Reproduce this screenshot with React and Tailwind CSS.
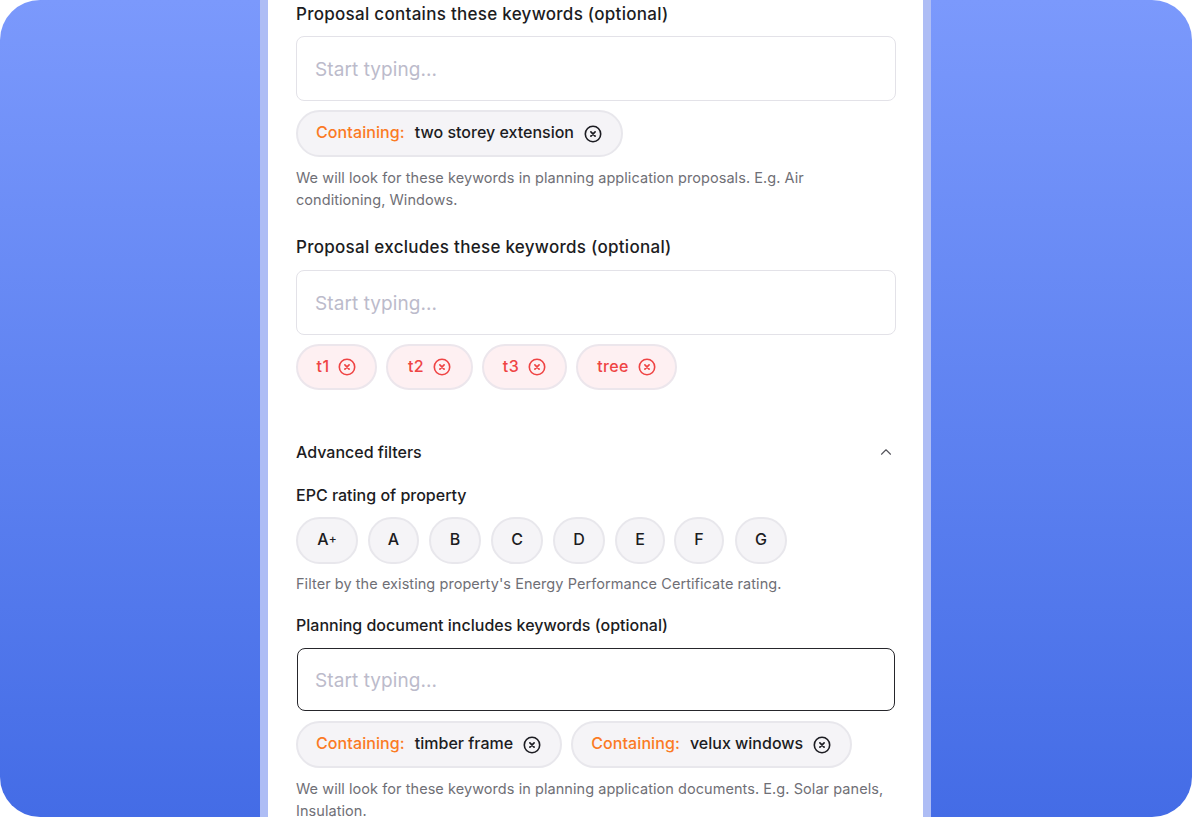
import { ChevronUp } from "lucide-react"

const font = { fontFamily: "Inter, sans-serif" }

const CloseIcon = ({ className }) => (
  <svg viewBox="0 0 18 18" fill="none" stroke="currentColor" className={className}>
    <circle cx="9" cy="9" r="7.7" strokeWidth="1.6" />
    <path d="M6.9 6.9l4.2 4.2M11.1 6.9l-4.2 4.2" strokeWidth="1.7" strokeLinecap="round" />
  </svg>
)

const Label = ({ children, className = "" }) => (
  <div className={`text-[17px] leading-6 font-medium text-[#1c1c22] tracking-[0.28px] ${className}`}>{children}</div>
)

const SubLabel = ({ children, className = "" }) => (
  <div className={`text-[16px] leading-6 font-medium text-[#1c1c22] ${className}`}>{children}</div>
)

const Help = ({ children, className = "" }) => (
  <p className={`w-[592px] text-[14.5px] leading-[22px] tracking-[0.06px] text-[#6f6f76] ${className}`}>{children}</p>
)

const KeywordInput = ({ focused }) => (
  <div
    className={`flex items-center rounded-lg bg-white pt-[3px] text-[19px] tracking-[0.08px] text-[#bcbbcb] ${
      focused ? "mx-px h-[63px] border-[1.5px] border-[#26262b] pl-[17px]" : "h-[65px] border border-[#e3e2e8] pl-[18px]"
    }`}
  >
    Start typing...
  </div>
)

const ContainChip = ({ text }) => (
  <div className="flex h-[47px] items-center rounded-full border-2 border-[#e8e7ec] bg-[#f5f4f7] pr-[19px] pl-[18px] text-[16px] font-medium">
    <span className="mr-[10px] pb-[3px] tracking-[0.1px] text-[#fb7a24]">Containing:</span>
    <span className="mr-[10px] pb-[3px] text-[#1c1c22]">{text}</span>
    <CloseIcon className="h-[18px] w-[18px] text-[#1c1c22]" />
  </div>
)

const ExcludeChip = ({ text, className }) => (
  <div
    className={`flex h-[46px] items-center justify-center gap-[9px] rounded-full border-2 border-[#ece6ec] bg-[#fef0f2] text-[16px] font-medium tracking-[0.4px] text-[#ef4444] ${className}`}
  >
    <span className="pb-[2px]">{text}</span>
    <CloseIcon className="h-[18px] w-[18px]" />
  </div>
)

const Rating = ({ children, className }) => (
  <div
    className={`flex h-[47px] items-center justify-center rounded-full border-2 border-[#e8e7ec] bg-[#f5f4f7] pb-[3px] text-[16px] font-medium text-[#1c1c22] ${className}`}
  >
    {children}
  </div>
)

export default function App() {
  return (
    <div className="h-[818px] w-[1192px] overflow-hidden bg-white" style={font}>
      <div className="h-[817px] overflow-hidden rounded-[40px] bg-gradient-to-b from-[#7b99fc] to-[#446ce6] pl-[260px]">
        <div className="h-full w-[671px] bg-[#aebdf5] px-2">
          <div className="h-full overflow-hidden bg-white pt-[2px] pr-[27px] pl-7">
            <Label>Proposal contains these keywords (optional)</Label>
            <div className="mt-[10px]">
              <KeywordInput />
            </div>
            <div className="mt-[9px] flex gap-[9px]">
              <ContainChip text="two storey extension" />
            </div>
            <Help className="mt-[10px]">
              We will look for these keywords in planning application proposals. E.g. Air conditioning, Windows.
            </Help>

            <Label className="mt-6">Proposal excludes these keywords (optional)</Label>
            <div className="mt-[11px]">
              <KeywordInput />
            </div>
            <div className="mt-[9px] flex gap-[9px]">
              <ExcludeChip text="t1" className="w-[81px]" />
              <ExcludeChip text="t2" className="w-[87px]" />
              <ExcludeChip text="t3" className="w-[85px]" />
              <ExcludeChip text="tree" className="w-[101px]" />
            </div>

            <div className="mt-[50px] flex items-center justify-between pr-px">
              <SubLabel>Advanced filters</SubLabel>
              <ChevronUp className="h-[18px] w-[18px] text-[#55555c]" strokeWidth={1.5} />
            </div>

            <SubLabel className="mt-[19px]">EPC rating of property</SubLabel>
            <div className="mt-[10px] flex gap-[10px]">
              <Rating className="w-[62px]">
                A<span className="text-[12px]">+</span>
              </Rating>
              <Rating className="w-[51px]">A</Rating>
              <Rating className="w-[52px]">B</Rating>
              <Rating className="w-[52px]">C</Rating>
              <Rating className="w-[52px]">D</Rating>
              <Rating className="w-[50px]">E</Rating>
              <Rating className="-ml-px w-[50px]">F</Rating>
              <Rating className="ml-px w-[52px]">G</Rating>
            </div>
            <Help className="mt-[9px]">Filter by the existing property's Energy Performance Certificate rating.</Help>

            <SubLabel className="mt-[18px]">Planning document includes keywords (optional)</SubLabel>
            <div className="mt-[11px]">
              <KeywordInput focused />
            </div>
            <div className="mt-[10px] flex gap-[9px]">
              <ContainChip text="timber frame" />
              <ContainChip text="velux windows" />
            </div>
            <Help className="mt-[10px]">
              We will look for these keywords in planning application documents. E.g. Solar panels, Insulation.
            </Help>
          </div>
        </div>
      </div>
    </div>
  )
}
